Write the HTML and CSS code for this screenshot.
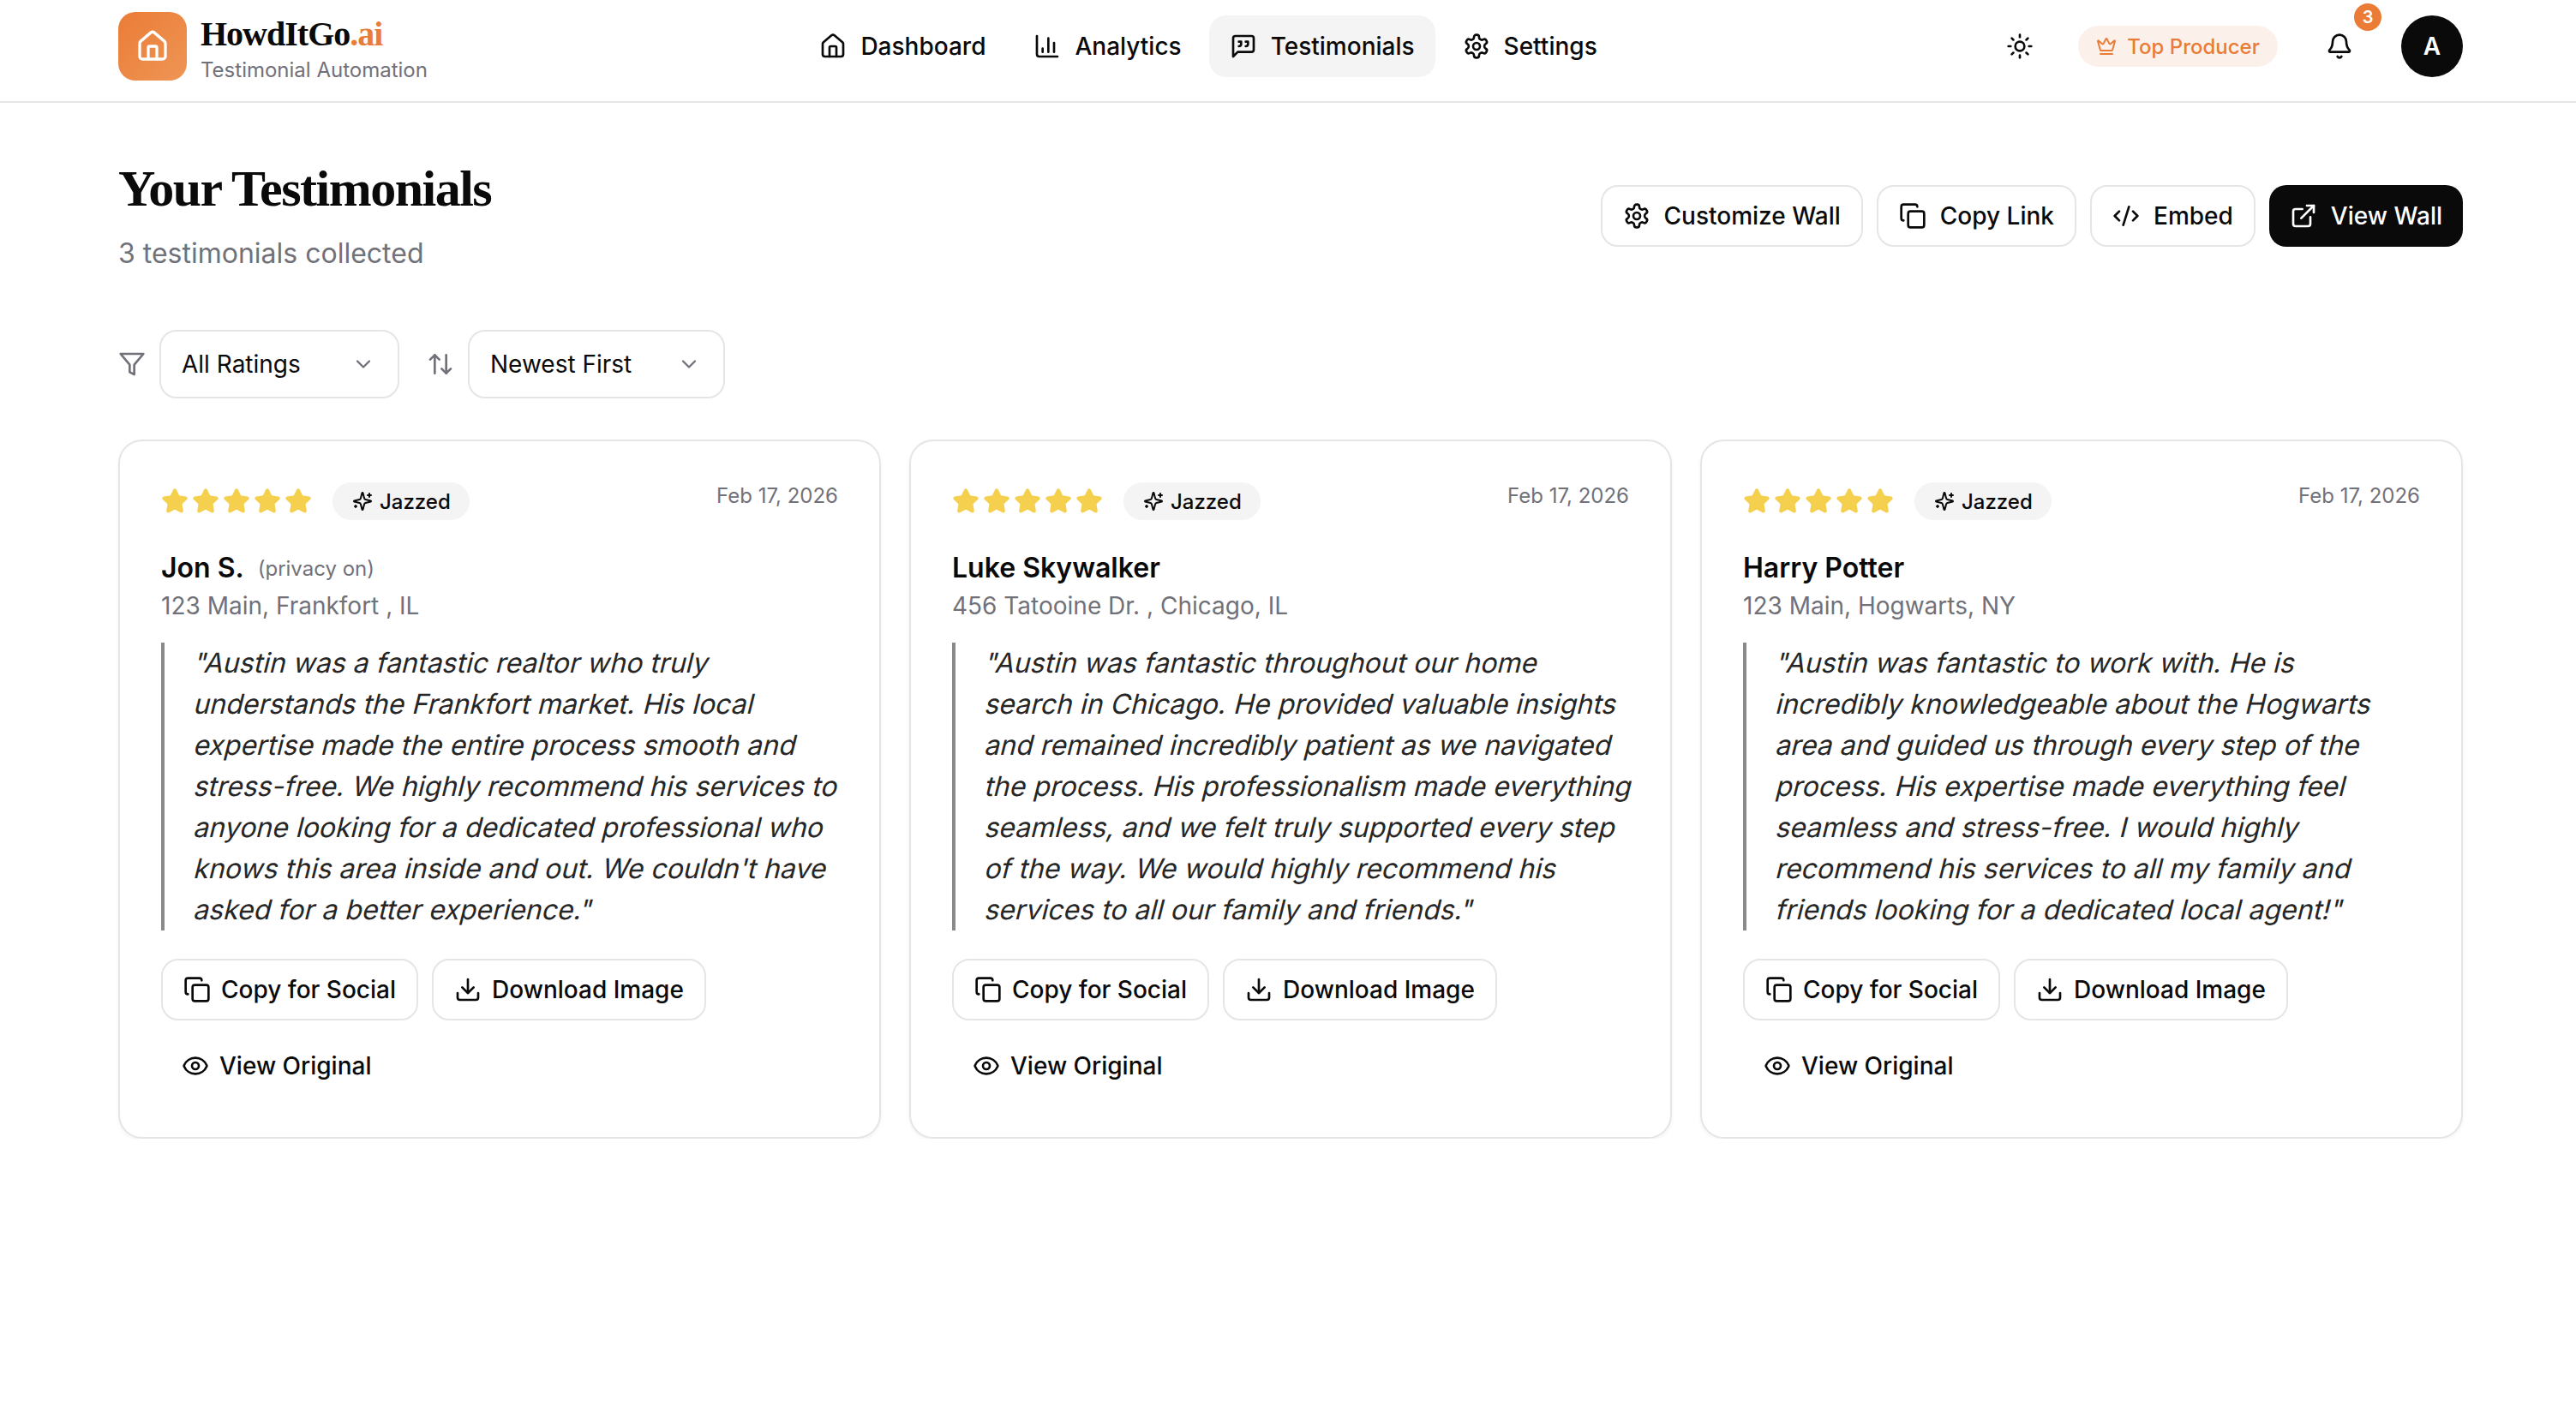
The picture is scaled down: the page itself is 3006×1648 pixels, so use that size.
FILE: index.html
```html
<!DOCTYPE html>
<html lang="en">
<head>
    <meta charset="UTF-8">
    <meta name="viewport" content="width=device-width, initial-scale=1.0">
    <title>HowdItGo.ai - Your Testimonials</title>
    <link rel="stylesheet" href="styles.css">
</head>
<body>
    <!-- Icon sprite -->
    <svg class="sprite" xmlns="http://www.w3.org/2000/svg">
        <symbol id="i-house" viewBox="0 0 24 24"><path d="M15 21v-8a1 1 0 0 0-1-1h-4a1 1 0 0 0-1 1v8"/><path d="M3 10a2 2 0 0 1 .709-1.528l7-5.999a2 2 0 0 1 2.582 0l7 5.999A2 2 0 0 1 21 10v9a2 2 0 0 1-2 2H5a2 2 0 0 1-2-2z"/></symbol>
        <symbol id="i-chart" viewBox="0 0 24 24"><path d="M3 3v16a2 2 0 0 0 2 2h16"/><path d="M18 17V9"/><path d="M13 17V5"/><path d="M8 17v-3"/></symbol>
        <symbol id="i-quote" viewBox="0 0 24 24"><path d="M21 15a2 2 0 0 1-2 2H7l-4 4V5a2 2 0 0 1 2-2h14a2 2 0 0 1 2 2z"/><path d="M8 12a2 2 0 0 0 2-2V8H8"/><path d="M14 12a2 2 0 0 0 2-2V8h-2"/></symbol>
        <symbol id="i-gear" viewBox="0 0 24 24"><path d="M12.22 2h-.44a2 2 0 0 0-2 2v.18a2 2 0 0 1-1 1.73l-.43.25a2 2 0 0 1-2 0l-.15-.08a2 2 0 0 0-2.73.73l-.22.38a2 2 0 0 0 .73 2.73l.15.1a2 2 0 0 1 1 1.72v.51a2 2 0 0 1-1 1.74l-.15.09a2 2 0 0 0-.73 2.73l.22.38a2 2 0 0 0 2.73.73l.15-.08a2 2 0 0 1 2 0l.43.25a2 2 0 0 1 1 1.73V20a2 2 0 0 0 2 2h.44a2 2 0 0 0 2-2v-.18a2 2 0 0 1 1-1.73l.43-.25a2 2 0 0 1 2 0l.15.08a2 2 0 0 0 2.73-.73l.22-.39a2 2 0 0 0-.73-2.73l-.15-.08a2 2 0 0 1-1-1.74v-.5a2 2 0 0 1 1-1.74l.15-.09a2 2 0 0 0 .73-2.73l-.22-.38a2 2 0 0 0-2.73-.73l-.15.08a2 2 0 0 1-2 0l-.43-.25a2 2 0 0 1-1-1.73V4a2 2 0 0 0-2-2z"/><circle cx="12" cy="12" r="3"/></symbol>
        <symbol id="i-sun" viewBox="0 0 24 24"><circle cx="12" cy="12" r="4"/><path d="M12 2v2"/><path d="M12 20v2"/><path d="m4.93 4.93 1.41 1.41"/><path d="m17.66 17.66 1.41 1.41"/><path d="M2 12h2"/><path d="M20 12h2"/><path d="m6.34 17.66-1.41 1.41"/><path d="m19.07 4.93-1.41 1.41"/></symbol>
        <symbol id="i-crown" viewBox="0 0 24 24"><path d="M11.562 3.266a.5.5 0 0 1 .876 0L15.39 8.87a1 1 0 0 0 1.516.294L21.183 5.5a.5.5 0 0 1 .798.519l-2.834 10.246a1 1 0 0 1-.956.734H5.81a1 1 0 0 1-.957-.734L2.02 6.02a.5.5 0 0 1 .798-.519l4.276 3.664a1 1 0 0 0 1.516-.294z"/><path d="M5 21h14"/></symbol>
        <symbol id="i-bell" viewBox="0 0 24 24"><path d="M10.268 21a2 2 0 0 0 3.464 0"/><path d="M3.262 15.326A1 1 0 0 0 4 17h16a1 1 0 0 0 .74-1.673C19.41 13.956 18 12.499 18 8A6 6 0 0 0 6 8c0 4.499-1.411 5.956-2.738 7.326"/></symbol>
        <symbol id="i-copy" viewBox="0 0 24 24"><rect x="8" y="8" width="14" height="14" rx="2"/><path d="M4 16c-1.1 0-2-.9-2-2V4c0-1.1.9-2 2-2h10c1.1 0 2 .9 2 2"/></symbol>
        <symbol id="i-code" viewBox="0 0 24 24"><path d="m18 16 4-4-4-4"/><path d="m6 8-4 4 4 4"/><path d="m14.5 4-5 16"/></symbol>
        <symbol id="i-external" viewBox="0 0 24 24"><path d="M15 3h6v6"/><path d="M10 14 21 3"/><path d="M18 13v6a2 2 0 0 1-2 2H5a2 2 0 0 1-2-2V8a2 2 0 0 1 2-2h6"/></symbol>
        <symbol id="i-filter" viewBox="0 0 24 24"><polygon points="22 3 2 3 10 12.46 10 19 14 21 14 12.46 22 3"/></symbol>
        <symbol id="i-sort" viewBox="0 0 24 24"><path d="m21 16-4 4-4-4"/><path d="M17 20V4"/><path d="m3 8 4-4 4 4"/><path d="M7 4v16"/></symbol>
        <symbol id="i-chevron" viewBox="0 0 24 24"><path d="m6 9 6 6 6-6"/></symbol>
        <symbol id="i-star" viewBox="0 0 24 24"><path d="M11.525 2.295a.53.53 0 0 1 .95 0l2.31 4.679a2.123 2.123 0 0 0 1.595 1.16l5.166.756a.53.53 0 0 1 .294.904l-3.736 3.638a2.123 2.123 0 0 0-.611 1.878l.882 5.14a.53.53 0 0 1-.771.56l-4.618-2.428a2.122 2.122 0 0 0-1.973 0L6.396 21.01a.53.53 0 0 1-.77-.56l.881-5.139a2.122 2.122 0 0 0-.611-1.879L2.16 9.795a.53.53 0 0 1 .294-.906l5.165-.755a2.122 2.122 0 0 0 1.597-1.16z"/></symbol>
        <symbol id="i-sparkles" viewBox="0 0 24 24"><path d="M9.937 15.5A2 2 0 0 0 8.5 14.063l-6.135-1.582a.5.5 0 0 1 0-.962L8.5 9.936A2 2 0 0 0 9.937 8.5l1.582-6.135a.5.5 0 0 1 .963 0L14.063 8.5A2 2 0 0 0 15.5 9.937l6.135 1.581a.5.5 0 0 1 0 .964L15.5 14.063a2 2 0 0 0-1.437 1.437l-1.582 6.135a.5.5 0 0 1-.963 0z"/><path d="M20 3v4"/><path d="M22 5h-4"/><path d="M4 17v2"/><path d="M5 18H3"/></symbol>
        <symbol id="i-download" viewBox="0 0 24 24"><path d="M12 15V3"/><path d="M21 15v4a2 2 0 0 1-2 2H5a2 2 0 0 1-2-2v-4"/><path d="m7 10 5 5 5-5"/></symbol>
        <symbol id="i-eye" viewBox="0 0 24 24"><path d="M2.062 12.348a1 1 0 0 1 0-.696 10.75 10.75 0 0 1 19.876 0 1 1 0 0 1 0 .696 10.75 10.75 0 0 1-19.876 0"/><circle cx="12" cy="12" r="3"/></symbol>
    </svg>

    <header class="topbar">
        <div class="brand">
            <div class="brand-logo"><svg class="icon icon-logo"><use href="#i-house"/></svg></div>
            <div class="brand-text">
                <div class="brand-name">HowdItGo<span class="brand-accent">.ai</span></div>
                <div class="brand-sub">Testimonial Automation</div>
            </div>
        </div>
        <nav class="nav">
            <a class="nav-item"><svg class="icon"><use href="#i-house"/></svg>Dashboard</a>
            <a class="nav-item"><svg class="icon"><use href="#i-chart"/></svg>Analytics</a>
            <a class="nav-item active"><svg class="icon"><use href="#i-quote"/></svg>Testimonials</a>
            <a class="nav-item"><svg class="icon"><use href="#i-gear"/></svg>Settings</a>
        </nav>
        <div class="topbar-right">
            <div class="icon-btn"><svg class="icon"><use href="#i-sun"/></svg></div>
            <div class="producer"><svg class="icon icon-sm"><use href="#i-crown"/></svg>Top Producer</div>
            <div class="icon-btn bell">
                <svg class="icon"><use href="#i-bell"/></svg>
                <span class="bell-badge">3</span>
            </div>
            <div class="avatar">A</div>
        </div>
    </header>

    <main class="page">
        <div class="page-head">
            <div>
                <h1>Your Testimonials</h1>
                <p class="page-sub">3 testimonials collected</p>
            </div>
            <div class="page-actions">
                <a class="btn"><svg class="icon"><use href="#i-gear"/></svg>Customize Wall</a>
                <a class="btn"><svg class="icon"><use href="#i-copy"/></svg>Copy Link</a>
                <a class="btn"><svg class="icon"><use href="#i-code"/></svg>Embed</a>
                <a class="btn btn-dark"><svg class="icon"><use href="#i-external"/></svg>View Wall</a>
            </div>
        </div>

        <div class="filters">
            <svg class="icon filter-icon"><use href="#i-filter"/></svg>
            <div class="select select-rating">All Ratings<svg class="icon chevron"><use href="#i-chevron"/></svg></div>
            <svg class="icon filter-icon sort-icon"><use href="#i-sort"/></svg>
            <div class="select select-sort">Newest First<svg class="icon chevron"><use href="#i-chevron"/></svg></div>
        </div>

        <div class="cards">
            <article class="card">
                <div class="card-top">
                    <div class="card-rating">
                        <div class="stars">
                            <svg class="star"><use href="#i-star"/></svg><svg class="star"><use href="#i-star"/></svg><svg class="star"><use href="#i-star"/></svg><svg class="star"><use href="#i-star"/></svg><svg class="star"><use href="#i-star"/></svg>
                        </div>
                        <span class="mood"><svg class="icon icon-xs"><use href="#i-sparkles"/></svg>Jazzed</span>
                    </div>
                    <span class="card-date">Feb 17, 2026</span>
                </div>
                <div class="card-name">Jon S.<span class="privacy">(privacy on)</span></div>
                <div class="card-address">123 Main, Frankfort , IL</div>
                <blockquote class="card-quote">
                    <span class="quote-line">"Austin was a fantastic realtor who truly</span>
                    <span class="quote-line">understands the Frankfort market. His local</span>
                    <span class="quote-line">expertise made the entire process smooth and</span>
                    <span class="quote-line">stress-free. We highly recommend his services to</span>
                    <span class="quote-line">anyone looking for a dedicated professional who</span>
                    <span class="quote-line">knows this area inside and out. We couldn't have</span>
                    <span class="quote-line">asked for a better experience."</span>
                </blockquote>
                <div class="card-actions">
                    <a class="btn"><svg class="icon"><use href="#i-copy"/></svg>Copy for Social</a>
                    <a class="btn"><svg class="icon"><use href="#i-download"/></svg>Download Image</a>
                </div>
                <a class="view-original"><svg class="icon"><use href="#i-eye"/></svg>View Original</a>
            </article>

            <article class="card">
                <div class="card-top">
                    <div class="card-rating">
                        <div class="stars">
                            <svg class="star"><use href="#i-star"/></svg><svg class="star"><use href="#i-star"/></svg><svg class="star"><use href="#i-star"/></svg><svg class="star"><use href="#i-star"/></svg><svg class="star"><use href="#i-star"/></svg>
                        </div>
                        <span class="mood"><svg class="icon icon-xs"><use href="#i-sparkles"/></svg>Jazzed</span>
                    </div>
                    <span class="card-date">Feb 17, 2026</span>
                </div>
                <div class="card-name">Luke Skywalker</div>
                <div class="card-address">456 Tatooine Dr. , Chicago, IL</div>
                <blockquote class="card-quote">
                    <span class="quote-line">"Austin was fantastic throughout our home</span>
                    <span class="quote-line">search in Chicago. He provided valuable insights</span>
                    <span class="quote-line">and remained incredibly patient as we navigated</span>
                    <span class="quote-line">the process. His professionalism made everything</span>
                    <span class="quote-line">seamless, and we felt truly supported every step</span>
                    <span class="quote-line">of the way. We would highly recommend his</span>
                    <span class="quote-line">services to all our family and friends."</span>
                </blockquote>
                <div class="card-actions">
                    <a class="btn"><svg class="icon"><use href="#i-copy"/></svg>Copy for Social</a>
                    <a class="btn"><svg class="icon"><use href="#i-download"/></svg>Download Image</a>
                </div>
                <a class="view-original"><svg class="icon"><use href="#i-eye"/></svg>View Original</a>
            </article>

            <article class="card">
                <div class="card-top">
                    <div class="card-rating">
                        <div class="stars">
                            <svg class="star"><use href="#i-star"/></svg><svg class="star"><use href="#i-star"/></svg><svg class="star"><use href="#i-star"/></svg><svg class="star"><use href="#i-star"/></svg><svg class="star"><use href="#i-star"/></svg>
                        </div>
                        <span class="mood"><svg class="icon icon-xs"><use href="#i-sparkles"/></svg>Jazzed</span>
                    </div>
                    <span class="card-date">Feb 17, 2026</span>
                </div>
                <div class="card-name">Harry Potter</div>
                <div class="card-address">123 Main, Hogwarts, NY</div>
                <blockquote class="card-quote">
                    <span class="quote-line">"Austin was fantastic to work with. He is</span>
                    <span class="quote-line">incredibly knowledgeable about the Hogwarts</span>
                    <span class="quote-line">area and guided us through every step of the</span>
                    <span class="quote-line">process. His expertise made everything feel</span>
                    <span class="quote-line">seamless and stress-free. I would highly</span>
                    <span class="quote-line">recommend his services to all my family and</span>
                    <span class="quote-line">friends looking for a dedicated local agent!"</span>
                </blockquote>
                <div class="card-actions">
                    <a class="btn"><svg class="icon"><use href="#i-copy"/></svg>Copy for Social</a>
                    <a class="btn"><svg class="icon"><use href="#i-download"/></svg>Download Image</a>
                </div>
                <a class="view-original"><svg class="icon"><use href="#i-eye"/></svg>View Original</a>
            </article>
        </div>
    </main>
</body>
</html>
```

FILE: styles.css
```css
body {
    margin: 0;
    background-color: #fff;
    color: #0a0a0a;
    font-family: Inter, "Liberation Sans", sans-serif;
    font-size: 28px;
}

.sprite {
    display: none;
}

/* Lucide style line icons */
.icon {
    width: 32px;
    height: 32px;
    flex-shrink: 0;
    fill: none;
    stroke: currentColor;
    stroke-width: 2;
    stroke-linecap: round;
    stroke-linejoin: round;
}

.icon-sm {
    width: 24px;
    height: 24px;
}

.icon-xs {
    width: 24px;
    height: 24px;
}

/* Top bar */
.topbar {
    display: flex;
    align-items: center;
    justify-content: space-between;
    box-sizing: border-box;
    height: 120px;
    padding: 0 132px 10px 138px;
    border-bottom: 2px solid #e5e5e5;
}

.brand {
    display: flex;
    align-items: center;
    gap: 16px;
}

.brand-logo {
    display: flex;
    align-items: center;
    justify-content: center;
    width: 80px;
    height: 80px;
    border-radius: 20px;
    background: linear-gradient(135deg, #ea7c37, #ef9555);
    color: #fff;
}

.icon-logo {
    width: 40px;
    height: 40px;
}

.brand-text {
    padding-top: 7px;
}

.brand-name {
    font-family: "Liberation Serif", serif;
    font-size: 40px;
    font-weight: 700;
    line-height: 44px;
    letter-spacing: -1px;
}

.brand-accent {
    color: #ea7c37;
}

.brand-sub {
    margin-top: 4px;
    font-size: 24px;
    line-height: 32px;
    color: #71717a;
}

.nav {
    display: flex;
    gap: 8px;
}

.nav-item {
    display: flex;
    align-items: center;
    gap: 16px;
    height: 72px;
    padding: 0 24px;
    border-radius: 20px;
    font-weight: 500;
}

.nav-item.active {
    background-color: #f4f4f4;
}

.topbar-right {
    display: flex;
    align-items: center;
    gap: 32px;
}

.icon-btn {
    display: flex;
    align-items: center;
    justify-content: center;
    width: 72px;
    height: 72px;
}

.bell {
    position: relative;
    width: 80px;
}

.bell-badge {
    position: absolute;
    top: -14px;
    right: -9px;
    width: 32px;
    height: 32px;
    border-radius: 50%;
    background-color: #ea7c37;
    color: #fff;
    font-size: 20px;
    font-weight: 600;
    line-height: 32px;
    text-align: center;
}

.producer {
    display: flex;
    align-items: center;
    gap: 12px;
    height: 48px;
    padding: 0 21px;
    border-radius: 24px;
    background-color: #fcf1ea;
    color: #ea7c37;
    font-size: 24px;
    font-weight: 500;
}

.avatar {
    width: 72px;
    height: 72px;
    border-radius: 50%;
    background-color: #0a0a0a;
    color: #fff;
    font-size: 28px;
    font-weight: 600;
    line-height: 72px;
    text-align: center;
}

/* Page */
.page {
    padding: 64px 132px 0 138px;
}

.page-head {
    display: flex;
    align-items: center;
    justify-content: space-between;
}

h1 {
    margin: 0;
    font-family: "Liberation Serif", serif;
    font-size: 60px;
    font-weight: 700;
    line-height: 72px;
    letter-spacing: -1.5px;
}

.page-sub {
    margin: 16px 0 0;
    font-size: 32px;
    line-height: 48px;
    color: #71717a;
}

.page-actions {
    display: flex;
    gap: 16px;
}

.btn {
    display: flex;
    align-items: center;
    gap: 16px;
    height: 72px;
    box-sizing: border-box;
    padding: 0 24px;
    border: 2px solid #e5e5e5;
    border-radius: 20px;
    font-weight: 500;
    white-space: nowrap;
}

.btn-dark {
    background-color: #0a0a0a;
    border: 0;
    color: #fff;
}

/* Filters */
.filters {
    display: flex;
    align-items: center;
    margin-top: 65px;
}

.filter-icon {
    color: #71717a;
}

.sort-icon {
    margin: 0 16px 0 32px;
}

.select {
    display: flex;
    align-items: center;
    justify-content: space-between;
    height: 80px;
    box-sizing: border-box;
    margin-left: 16px;
    padding: 0 26px 0 24px;
    border: 2px solid #e5e5e5;
    border-radius: 20px;
}

.select-rating {
    width: 280px;
}

.select-sort {
    width: 300px;
    margin-left: 0;
}

.chevron {
    width: 28px;
    height: 28px;
    color: #71717a;
}

/* Cards */
.cards {
    display: grid;
    grid-template-columns: repeat(3, minmax(0, 1fr));
    gap: 33px;
    margin-top: 48px;
}

.card {
    box-sizing: border-box;
    height: 816px;
    padding: 48px;
    border: 2px solid #e5e5e5;
    border-radius: 28px;
    box-shadow: 0 2px 4px rgba(0, 0, 0, 0.05);
}

.card-top {
    display: flex;
    align-items: flex-start;
    justify-content: space-between;
}

.card-rating {
    display: flex;
    align-items: center;
    gap: 24px;
}

.stars {
    display: flex;
    gap: 4px;
}

.star {
    width: 32px;
    height: 32px;
    fill: #f5d04e;
    stroke: #f5d04e;
    stroke-width: 2;
    stroke-linejoin: round;
}

.mood {
    display: flex;
    align-items: center;
    gap: 8px;
    height: 44px;
    padding: 0 22px 0 23px;
    border-radius: 22px;
    background-color: #f4f4f4;
    font-size: 24px;
    font-weight: 500;
}

.card-date {
    font-size: 24px;
    line-height: 32px;
    color: #71717a;
}

.card-name {
    height: 44px;
    margin-top: 34px;
    font-size: 32px;
    font-weight: 600;
    line-height: 44px;
}

.privacy {
    margin-left: 16px;
    font-size: 24px;
    font-weight: 400;
    line-height: 1;
    vertical-align: 2px;
    color: #71717a;
}

.card-address {
    font-size: 28px;
    line-height: 44px;
    color: #71717a;
}

.card-quote {
    margin: 21px 0 0;
    padding-left: 33px;
    border-left: 4px solid #8a8a8a;
    font-size: 32px;
    line-height: 48px;
    color: #262626;
}

/* Slanted line by line, the upright face is what the design shows */
.quote-line {
    display: block;
    transform: skewX(-14deg);
    transform-origin: 0 70%;
    white-space: nowrap;
}

.card-actions {
    display: flex;
    gap: 16px;
    margin-top: 33px;
}

.card-actions .btn {
    gap: 12px;
}

.view-original {
    display: flex;
    align-items: center;
    gap: 12px;
    height: 72px;
    margin-top: 17px;
    padding: 0 24px;
    font-weight: 500;
}
```
